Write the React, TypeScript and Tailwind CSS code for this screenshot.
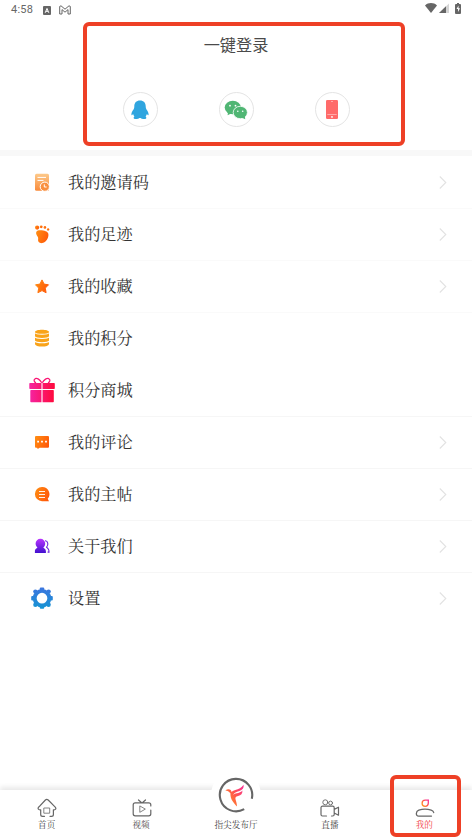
import React from 'react';

const InviteIcon = () => (
  <svg width="26" height="26" viewBox="0 0 26 26">
    <defs>
      <linearGradient id="invite" x1="0" y1="0" x2="0" y2="1">
        <stop offset="0" stopColor="#fdc98a" />
        <stop offset="1" stopColor="#f98a3a" />
      </linearGradient>
    </defs>
    <rect x="6" y="4.8" width="14" height="17" rx="1.5" fill="url(#invite)" />
    <path d="M8.5 8.4h8.5M8.5 11.4h6" stroke="#fff" strokeWidth="1" />
    <circle cx="15.8" cy="17.7" r="4.6" fill="#f98f3f" stroke="#fff" strokeWidth="1" />
    <path d="M15.3 15.4v2.6h2.3" fill="none" stroke="#fff" strokeWidth="1" />
  </svg>
);

const FootIcon = () => (
  <svg width="26" height="26" viewBox="0 0 26 26">
    <defs>
      <linearGradient id="orange" x1="0" y1="0.3" x2="1" y2="0.7">
        <stop offset="0" stopColor="#ff8a12" />
        <stop offset="1" stopColor="#ff5608" />
      </linearGradient>
    </defs>
    <g fill="url(#orange)">
      <circle cx="8.1" cy="6.6" r="2.1" />
      <circle cx="12.2" cy="5.8" r="1.4" />
      <circle cx="15.9" cy="6.4" r="1.3" />
      <circle cx="19.1" cy="8.4" r="1.2" />
      <path d="M7.4 10.8c1-2 4.2-1.8 6.8-1.3 3.6.6 5.6 2.1 5.2 5.1-.4 3.8-3 7.1-6.3 7.5-3 .3-4.4-1.6-4-3.8.3-1.6-.1-2.2-.9-3.4-1-1.4-1.4-2.8-.8-4.1z" />
    </g>
  </svg>
);

const StarIcon = () => (
  <svg width="26" height="26" viewBox="0 0 26 26">
    <path d="M13 6.9l2.1 4.2 4.4.7-3.2 3.3.8 4.6-4.1-2.1-4.1 2.1.8-4.6-3.2-3.3 4.4-.7z" fill="url(#orange)" stroke="url(#orange)" strokeWidth="1" strokeLinejoin="round" />
  </svg>
);

const CoinsIcon = () => (
  <svg width="26" height="26" viewBox="0 0 26 26">
    <path d="M6 7c0-3 14-3 14 0v12c0 3.4-14 3.4-14 0z" fill="#f9a31a" />
    <path d="M5.5 7.5c2 2.4 13 2.4 15 0M5.5 11.7c2 2.4 13 2.4 15 0M5.5 15.9c2 2.4 13 2.4 15 0" fill="none" stroke="#fff" strokeWidth="1.1" />
  </svg>
);

const GiftIcon = () => (
  <svg width="26" height="26" viewBox="0 0 26 26">
    <defs>
      <linearGradient id="gift" x1="0" y1="0" x2="1" y2="0">
        <stop offset="0" stopColor="#f523a0" />
        <stop offset="1" stopColor="#ff0a3c" />
      </linearGradient>
    </defs>
    <rect x=".3" y="6" width="25.5" height="6" rx=".7" fill="url(#gift)" />
    <rect x="1.3" y="13" width="23.5" height="12.3" rx=".7" fill="url(#gift)" />
    <path d="M13 6v20" stroke="#fff" strokeWidth="1.1" />
    <path d="M12.7 5.8C11 2.3 8 .8 6.2 1.7c-1.9 1.1-1.2 3.3.8 4.1M13.3 5.8C15 2.3 18 .8 19.8 1.7c1.9 1.1 1.2 3.3-.8 4.1" fill="none" stroke="#fa1674" strokeWidth="1.3" />
  </svg>
);

const CommentIcon = () => (
  <svg width="26" height="26" viewBox="0 0 26 26">
    <path d="M7.3 6.9h11.4c.8 0 1.3.5 1.3 1.3v9.3c0 .8-.5 1.3-1.3 1.3h-8.1L8.8 20l-.7-1.2h-.8c-.8 0-1.3-.5-1.3-1.3V8.2c0-.8.5-1.3 1.3-1.3z" fill="url(#orange)" />
    <path d="M8.2 12.7h1.8M12.1 12.7h1.8M16.1 12.7h1.8" stroke="#fff" strokeWidth="1.7" />
  </svg>
);

const PostIcon = () => (
  <svg width="26" height="26" viewBox="0 0 26 26">
    <path d="M13 6a7.1 7.1 0 1 0 0 14.2h7l-1.3-2.5A7.1 7.1 0 0 0 13 6z" fill="url(#orange)" />
    <path d="M10 10.5h6M10 13.5h6M10 16.5h6" stroke="#fff" strokeWidth=".9" />
  </svg>
);

const AboutIcon = () => (
  <svg width="26" height="26" viewBox="0 0 26 26">
    <defs>
      <linearGradient id="about" x1="0" y1="0" x2="0" y2="1">
        <stop offset="0" stopColor="#b934ff" />
        <stop offset="1" stopColor="#4110cf" />
      </linearGradient>
    </defs>
    <path d="M11.4 5.8a4.8 4.8 0 0 0-4.8 4.8c0 1.8.8 3 1.9 3.9L7 15.7c-.8.6-1.1 1.4-1.1 2.5v1.9h11v-1.9c0-1.1-.4-1.9-1.2-2.5l-1.4-1.2c1.2-.9 1.9-2.1 1.9-3.9a4.8 4.8 0 0 0-4.8-4.8z" fill="url(#about)" />
    <path d="M16 7.8c3-.2 3.8 4 1.6 6.4l1.4 1.4c.8.9 1.1 2 1 3.5h-1.4" fill="none" stroke="#6a20dd" strokeWidth="1.1" />
  </svg>
);

const GearIcon = () => (
  <svg width="26" height="26" viewBox="0 0 26 26">
    <defs>
      <linearGradient id="gear" gradientUnits="userSpaceOnUse" x1="13" y1="2" x2="13" y2="24">
        <stop offset="0" stopColor="#3d74df" />
        <stop offset="1" stopColor="#1595d3" />
      </linearGradient>
    </defs>
    <circle cx="13" cy="13.2" r="7.3" fill="none" stroke="url(#gear)" strokeWidth="3.9" />
    <g fill="url(#gear)">
      <rect x="10.8" y="2.5" width="4.4" height="4" rx="1" />
      <rect x="10.8" y="19.8" width="4.4" height="4" rx="1" />
      <rect x="2.2" y="11" width="4" height="4.4" rx="1" />
      <rect x="19.8" y="11" width="4" height="4.4" rx="1" />
      <circle cx="6.4" cy="6.6" r="2.2" />
      <circle cx="19.6" cy="6.6" r="2.2" />
      <circle cx="6.4" cy="19.8" r="2.2" />
      <circle cx="19.6" cy="19.8" r="2.2" />
    </g>
  </svg>
);

const menu = [
  { label: '我的邀请码', Icon: InviteIcon, arrow: true, line: 'border-[#fafafa]' },
  { label: '我的足迹', Icon: FootIcon, arrow: true, line: 'border-[#fafafa]' },
  { label: '我的收藏', Icon: StarIcon, arrow: true, line: 'border-[#fafafa]' },
  { label: '我的积分', Icon: CoinsIcon, arrow: false, line: 'border-transparent' },
  { label: '积分商城', Icon: GiftIcon, arrow: false, line: 'border-[#f6f6f6]' },
  { label: '我的评论', Icon: CommentIcon, arrow: true, line: 'border-[#f6f6f6]' },
  { label: '我的主帖', Icon: PostIcon, arrow: true, line: 'border-[#f6f6f6]' },
  { label: '关于我们', Icon: AboutIcon, arrow: true, line: 'border-[#f6f6f6]' },
  { label: '设置', Icon: GearIcon, arrow: true, line: 'border-transparent' },
];

const StatusBar = () => (
  <div className="flex h-5 items-center pl-[11px] pr-[11px] text-[#666]">
    <span className="font-['Roboto',sans-serif] text-[11px] leading-5 tracking-[0.25px]">4:58</span>
    <svg className="ml-[10px]" width="8" height="9" viewBox="0 0 8 9">
      <rect width="8" height="9" rx="1" fill="#666" />
      <path d="M2.2 6.8L4 2.4l1.8 4.4M3 5.3h2" fill="none" stroke="#fff" strokeWidth="1" />
    </svg>
    <svg className="ml-2" width="12" height="10" viewBox="0 0 12 10" fill="none" stroke="#666">
      <path d="M.7 9V1.4L2 .8l4 3.4L10 .8l1.3.6V9H9V4.6L6 7.2 3 4.6V9z" strokeWidth="1" />
    </svg>
    <div className="ml-auto flex items-center pb-1">
      <svg width="12" height="10" viewBox="0 0 12 10">
        <path d="M0 2.4C3.4-.7 8.6-.7 12 2.4L6 10z" fill="#666" />
      </svg>
      <svg className="ml-[2px]" width="10" height="10" viewBox="0 0 10 10">
        <path d="M0 10L10 .5V10z" fill="#d5d5d5" />
        <path d="M0 10L7 3.2V10z" fill="#666" />
      </svg>
      <svg className="ml-1.5" width="6" height="11" viewBox="0 0 6 11">
        <path d="M2 0h2v1h1q1 0 1 1v8q0 1-1 1H1q-1 0-1-1V2q0-1 1-1h1z" fill="#666" />
        <path d="M3.5 2.5L1.5 6H3v3l2-3.8H3.5z" fill="#fff" />
      </svg>
    </div>
  </div>
);

const Login = () => (
  <div className="relative h-[130px]">
    <h1 className="pt-[12px] text-center font-['Noto_Sans_CJK_SC',sans-serif] text-[16.2px] leading-6 text-[#4a4a4a]">一键登录</h1>
    <div className="mt-[36px] flex justify-center gap-[61px]">
      <button className="flex size-[35px] items-center justify-center rounded-full border border-[#e4e4e4]">
        <svg width="18" height="20" viewBox="0 0 18 20">
          <path d="M9 .5c-3.7 0-5.7 2.4-5.7 5.8 0 1.3-.2 2.2-.8 3.2C1.2 11.2.4 12.8.4 14.5c0 1.1.5 1.1 1.7-.5.2 1 .7 1.8 1.3 2.4-1.1.6-1.2 2.6.7 2.6 1.7 0 3.6.1 4.3-1h1.2c.7 1.1 2.6 1 4.3 1 1.9 0 1.8-2 .7-2.6.6-.6 1.1-1.4 1.3-2.4 1.2 1.6 1.7 1.6 1.7.5 0-1.7-.8-3.3-2.1-5-.6-1-.8-1.9-.8-3.2C14.7 2.9 12.7.5 9 .5z" fill="#30a5df" />
        </svg>
      </button>
      <button className="flex size-[35px] items-center justify-center rounded-full border border-[#e4e4e4]">
        <svg width="24" height="20" viewBox="0 0 24 20">
          <ellipse cx="8.8" cy="7.5" rx="8.1" ry="6.7" fill="#50b674" />
          <path d="M4 12l-.4 3.3 4-2" fill="#50b674" />
          <ellipse cx="16.3" cy="12.5" rx="7.1" ry="6.2" fill="#50b674" stroke="#fff" strokeWidth=".8" />
          <path d="M17.5 17.5l3.7 1.8-.4-3.5" fill="#50b674" />
          <g fill="#fff">
            <circle cx="6" cy="5.7" r=".9" />
            <circle cx="11.5" cy="5.7" r=".9" />
            <circle cx="13.8" cy="11.2" r=".8" />
            <circle cx="18.7" cy="11.2" r=".8" />
          </g>
        </svg>
      </button>
      <button className="flex size-[35px] items-center justify-center rounded-full border border-[#e4e4e4]">
        <svg width="12" height="19" viewBox="0 0 12 19">
          <rect width="12" height="19" rx="1.3" fill="#ff6b6a" />
          <path d="M5 1.5h2M1.3 14.5h9.4" stroke="#ffb9b9" strokeWidth=".8" />
          <circle cx="6" cy="16.9" r=".9" fill="#fff" />
        </svg>
      </button>
    </div>
    <div className="pointer-events-none absolute left-[83px] top-[2px] h-[124px] w-[322px] rounded-[6px] border-4 border-[#ee4026]" />
  </div>
);

const TabBar = () => (
  <nav className="relative flex h-[50px] bg-white text-[8.6px] leading-[13px] text-[#444] shadow-[0_-3px_5px_rgba(0,0,0,0.09)]">
    <div className="flex flex-1 flex-col items-center pt-[7px]">
      <svg width="20" height="21" viewBox="0 0 20 21" fill="none" stroke="#666" strokeWidth="1.2" strokeLinecap="round" strokeLinejoin="round">
        <path d="M7.5 19.3H5.6c-1.3 0-1.9-.8-1.9-1.9v-4.6c-2.5.3-3.4-1.4-1.7-3L8.4 3q1.3-1.2 2.8 0L18 9.8c1.6 1.6.8 3.3-1.6 3v4.6c0 1.1-.8 1.9-1.9 1.9H13" />
        <rect x="7.2" y="11" width="5.5" height="5.2" strokeWidth=".8" />
      </svg>
      <span className="-ml-px">首页</span>
    </div>
    <div className="flex flex-1 flex-col items-center pt-[7px]">
      <svg width="20" height="21" viewBox="0 0 20 21" fill="none" stroke="#666" strokeWidth="1.2" strokeLinecap="round" strokeLinejoin="round">
        <path d="M18.8 9V7.8c0-1.3-.7-2-2-2H3.2c-1.3 0-2 .7-2 2v9c0 1.3.7 2 2 2h13.6c1.3 0 2-.7 2-2V13M6.5 3l3.2 2.8M13.5 3l-3.2 2.8" />
        <path d="M7.8 9.3v6l5.2-3z" strokeWidth=".8" />
      </svg>
      <span className="-ml-px">视频</span>
    </div>
    <div className="relative flex flex-1 flex-col items-center pt-[28px]">
      <div className="absolute left-1/2 top-[-20px] flex size-[50px] -translate-x-1/2 items-center justify-center rounded-full bg-white">
        <svg width="36" height="36" viewBox="0 0 36 36">
          <defs>
            <linearGradient id="bird" x1="0" y1=".8" x2="1" y2="0">
              <stop offset="0" stopColor="#ff941f" />
              <stop offset=".5" stopColor="#ff564d" />
              <stop offset="1" stopColor="#f72b9d" />
            </linearGradient>
          </defs>
          <path d="M26.2 32.1A16.2 16.2 0 1 1 33.8 21.8" fill="none" stroke="#666" strokeWidth="2.1" />
          <path d="M7.3 13.4c1.8-1.3 4-1.5 5.4-.3l1 2c.4-.9 1.6-1.6 3.6-2.1 3.4-.8 6.2-2 8.3-5.2.5 3.3-1.1 5.2-4.2 6.2-3.2 1-5.2 1.6-6.3 4 1.6-1.7 3.4-1.7 5.1-2.1 1.7-.4 3-1 4.2-2.4.3 3-1.4 4.9-4.3 5.6-2.5.6-3.2 1.7-2.4 4 .6 1.9 1.2 4.1 1.3 6.3-2-2-3.9-4.3-5.3-6.7-1.3-2.4-1.3-5.2-1.3-6.4-1.2-1.9-3.1-2.6-5.1-2.9z" fill="url(#bird)" />
        </svg>
      </div>
      <span>指尖发布厅</span>
    </div>
    <div className="flex flex-1 flex-col items-center pt-[7px]">
      <svg width="20" height="21" viewBox="0 0 20 21" fill="none" stroke="#666" strokeWidth="1.2" strokeLinecap="round" strokeLinejoin="round">
        <circle cx="5.3" cy="5.3" r="2.5" strokeWidth=".9" />
        <circle cx="10.6" cy="6" r="1.9" strokeWidth=".9" />
        <path d="M11.5 19h1.2c.9 0 1.5-.6 1.5-1.5v-6.8c0-.9-.6-1.5-1.5-1.5H2.5C1.6 9.2 1 9.8 1 10.7v6.8c0 .9.6 1.5 1.5 1.5h4M14.2 12.4l4.3-2.2v8l-4.3-2.2" />
      </svg>
      <span className="-ml-px">直播</span>
    </div>
    <div className="flex flex-1 flex-col items-center pt-[7px] text-[#f23b3e]">
      <svg width="20" height="21" viewBox="0 0 20 21" fill="none" strokeLinecap="round">
        <path d="M13.3 3.1v3.2a3.1 3.1 0 1 1-3.1-3.2z" stroke="url(#bird)" strokeWidth="1.3" />
        <path d="M16.5 19.1H3.7c-3.3 0-3-4.9.1-6 4-1.2 8.4-1.2 12.4 0 1.6.5 2.3 1.2 2.5 2.4" stroke="#666" strokeWidth="1.3" />
      </svg>
      <span className="-ml-px">我的</span>
    </div>
    <div className="pointer-events-none absolute left-[390px] top-[-15px] h-[62px] w-[71px] rounded-[6px] border-4 border-[#ee4026]" />
  </nav>
);

export default function App() {
  return (
    <div className="flex h-[840px] w-[472px] flex-col overflow-hidden bg-white font-['Noto_Serif_CJK_SC','Noto_Sans_CJK_SC',serif]">
      <StatusBar />
      <Login />
      <div className="h-1.5 shrink-0 bg-[#f8f8f8]" />
      <main className="flex-1 pt-px">
        {menu.map(({ label, Icon, arrow, line }) => (
          <div key={label} className={`flex h-[52px] items-center border-b pb-px pl-[29px] pr-[25px] ${line}`}>
            <Icon />
            <span className="-mt-[3px] ml-[13px] text-[16.2px] leading-6 text-[#333]">{label}</span>
            {arrow && (
              <svg className="ml-auto" width="8" height="13" viewBox="0 0 8 13" fill="none" stroke="#e2e2e2" strokeWidth="1.1">
                <path d="M.8.5l6 6-6 6" />
              </svg>
            )}
          </div>
        ))}
      </main>
      <TabBar />
    </div>
  );
}
